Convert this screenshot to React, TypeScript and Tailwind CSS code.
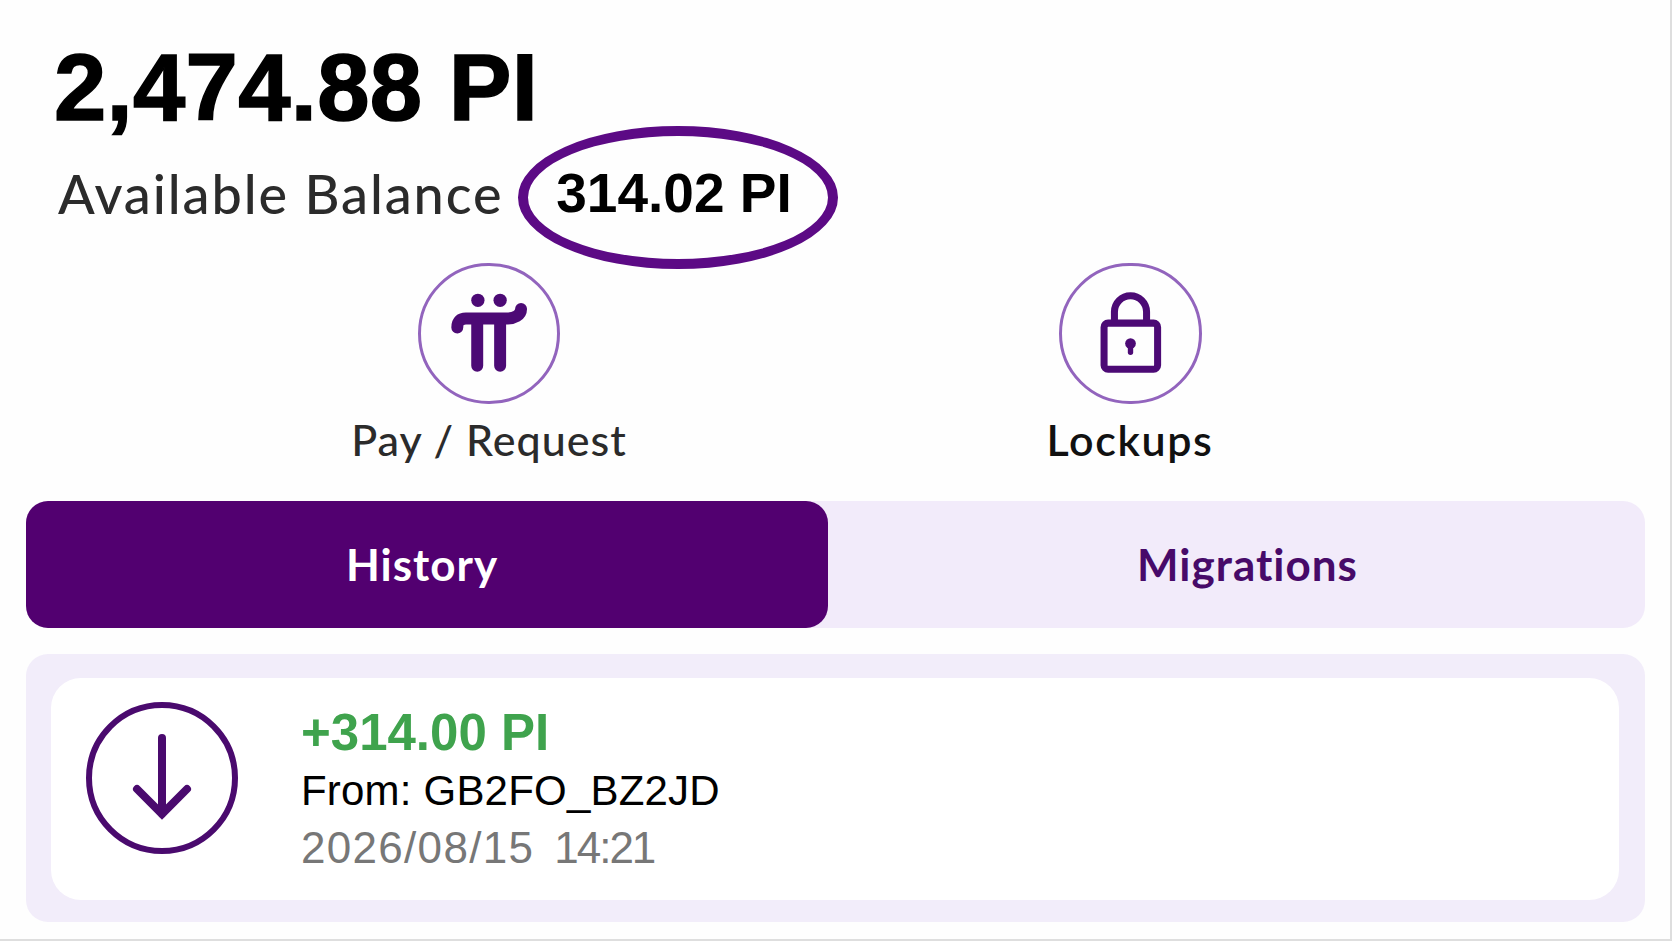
import React from 'react';

const latoFont = "font-['Lato','Noto_Sans',sans-serif]";
const arialFont = "font-['Liberation_Sans',Arial,sans-serif]";

const PiLogo = () => (
  <svg width="83" height="87" viewBox="350 120 250 260" fill="none">
    <circle cx="440" cy="150" r="20" fill="#4c0a75" />
    <circle cx="507" cy="150" r="20" fill="#4c0a75" />
    <path
      d="M378 232 C378 212 388 205 404 205 L525 205 C550 205 570 195 570 176"
      stroke="#4c0a75"
      strokeWidth="36"
      strokeLinecap="round"
    />
    <path d="M438 220 V347 M507 220 V347" stroke="#4c0a75" strokeWidth="36" strokeLinecap="round" />
  </svg>
);

const LockIcon = () => (
  <svg width="67" height="87" viewBox="230 120 200 260" fill="none">
    <path d="M282 215 V185 a48 48 0 0 1 96 0 V215" stroke="#4c0a75" strokeWidth="21" />
    <rect x="251" y="219" width="160" height="138" rx="12" stroke="#4c0a75" strokeWidth="21" />
    <circle cx="330" cy="280" r="16" fill="#4c0a75" />
    <path d="M330 282 V306" stroke="#4c0a75" strokeWidth="16" strokeLinecap="round" />
  </svg>
);

const ArrowDown = () => (
  <svg width="66" height="88" viewBox="0 0 66 88" fill="none">
    <path
      d="M33 4 V80 M8 55 L33 80 L58 55"
      stroke="#4a0a6e"
      strokeWidth="8"
      strokeLinecap="round"
      strokeLinejoin="miter"
    />
  </svg>
);

const App = () => {
  return (
    <div className="w-[1672px] h-[941px] overflow-hidden bg-[#fefefe] border-r-2 border-b-2 border-[#dedede]">
      {/* Balance */}
      <div className="h-[126px] pl-[54px] pt-[38px]">
        <h1 className={`${arialFont} text-[94px] leading-[100px] tracking-[0.3px] font-bold text-black [-webkit-text-stroke:1.5px_black]`}>
          2,474.88 PI
        </h1>
      </div>

      <div className="h-[137px] pl-[58px] flex items-start">
        <span className={`${latoFont} w-[460px] h-[143px] pb-[8px] flex items-center text-[54px] tracking-[1.9px] font-medium text-[#2b2b2b]`}>
          Available Balance
        </span>
        <span className="w-[320px] h-[143px] pr-[8px] pb-[8px] flex items-center justify-center rounded-[50%] border-[10px] border-[#5c0a85]">
          <span className={`${arialFont} text-[55px] font-bold text-black`}>314.02 PI</span>
        </span>
      </div>

      {/* Actions */}
      <div className="h-[238px] pl-[339px] flex gap-[341px]">
        <div className="w-[300px] flex flex-col items-center">
          <div className="w-[142px] h-[141px] rounded-full border-[3.5px] border-[#9264bd] flex items-center justify-center">
            <PiLogo />
          </div>
          <span className={`${latoFont} mt-[4px] text-[43px] tracking-[1px] font-medium text-[#2b2b2b]`}>Pay / Request</span>
        </div>
        <div className="w-[300px] flex flex-col items-center">
          <div className="w-[143px] h-[141px] rounded-full border-[3.5px] border-[#9264bd] flex items-center justify-center">
            <LockIcon />
          </div>
          <span className={`${latoFont} mt-[4px] text-[43px] tracking-[1.6px] font-semibold text-[#111111]`}>Lockups</span>
        </div>
      </div>

      {/* Tabs */}
      <div className="mx-[26px] w-[1619px] h-[127px] flex rounded-[22px] bg-[#f2ebfa]">
        <div className="w-[802px] pr-[10px] pb-[2px] flex items-center justify-center rounded-[22px] bg-[#520070]">
          <span className={`${latoFont} text-[44px] tracking-[1px] font-bold text-white`}>History</span>
        </div>
        <div className="flex-1 pl-[22px] pb-[2px] flex items-center justify-center">
          <span className={`${latoFont} text-[44px] tracking-[1px] font-bold text-[#470a69]`}>Migrations</span>
        </div>
      </div>

      {/* Transaction */}
      <div className="mt-[26px] mx-[26px] w-[1619px] h-[268px] pt-[24px] pl-[25px] pr-[26px] rounded-[22px] bg-[#f2edfa]">
        <div className="h-[222px] pl-[35px] flex items-start rounded-[30px] bg-white">
          <div className="mt-[24px] w-[152px] h-[152px] shrink-0 rounded-full border-[6px] border-[#4a0a6e] flex items-center justify-center">
            <ArrowDown />
          </div>
          <div className={`${arialFont} ml-[63px] mt-[25px] flex flex-col`}>
            <span className="text-[51px] leading-[59px] font-bold text-[#3fa34d]">+314.00 PI</span>
            <span className="text-[42px] leading-[58px] tracking-[0.2px] text-black">From: GB2FO_BZ2JD</span>
            <span className="flex gap-[20px] text-[44px] leading-[56px] text-[#777777]">
              <span className="tracking-[1.3px]">2026/08/15</span>
              <span className="tracking-[-2px]">14:21</span>
            </span>
          </div>
        </div>
      </div>
    </div>
  );
};

export default App;
